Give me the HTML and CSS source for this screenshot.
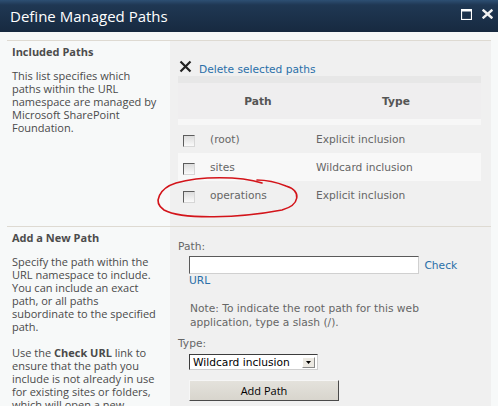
FILE: index.html
```html
<!DOCTYPE html>
<html lang="en">
<head>
  <meta charset="UTF-8" />
  <title>Define Managed Paths</title>
  <link rel="stylesheet" href="styles.css">
</head>
<body>
  <header class="dlg-title">
    <h1>Define Managed Paths</h1>
    <div class="title-btns">
      <svg width="11" height="11" viewBox="0 0 11 11">
        <rect x="0.5" y="0.5" width="10" height="10" fill="none" stroke="#fff" stroke-width="1.2"/>
        <rect x="0.5" y="0.5" width="10" height="2" fill="#fff"/>
      </svg>
      <svg width="11" height="10" viewBox="0 0 11 10">
        <path d="M1.5 1.5 L9.5 8.5 M9.5 1.5 L1.5 8.5" stroke="#f2f2f2" stroke-width="2.4" stroke-linecap="square"/>
      </svg>
    </div>
  </header>

  <main class="dlg-body">
    <section class="form-section">
      <div class="section-desc">
        <h2>Included Paths</h2>
        <p>This list specifies which paths within the URL namespace are managed by Microsoft SharePoint Foundation.</p>
      </div>
      <div class="section-body">
        <div class="toolbar">
          <svg class="del-icon" width="13" height="13" viewBox="0 0 13 13">
            <path d="M1.5 1.5 L11.5 11.5 M11.5 1.5 L1.5 11.5" stroke="#222" stroke-width="2.2"/>
          </svg>
          <a href="#">Delete selected paths</a>
        </div>
        <div class="toolbar-sep"></div>
        <table class="paths">
          <thead>
            <tr>
              <th class="col-check"></th>
              <th class="col-path">Path</th>
              <th class="col-type">Type</th>
            </tr>
          </thead>
          <tbody>
            <tr>
              <td><span class="cb"></span></td>
              <td>(root)</td>
              <td>Explicit inclusion</td>
            </tr>
            <tr class="alt">
              <td><span class="cb"></span></td>
              <td>sites</td>
              <td>Wildcard inclusion</td>
            </tr>
            <tr>
              <td><span class="cb"></span></td>
              <td>operations</td>
              <td>Explicit inclusion</td>
            </tr>
          </tbody>
        </table>
      </div>
    </section>

    <section class="form-section">
      <div class="section-desc">
        <h2>Add a New Path</h2>
        <p>Specify the path within the URL namespace to include. You can include an exact path, or all paths subordinate to the specified path.</p>
        <p>Use the <b>Check URL</b> link to ensure that the path you include is not already in use for existing sites or folders, which will open a new browser window.</p>
      </div>
      <div class="section-body add-path">
        <div class="field-label">Path:</div>
        <div class="field-control">
          <input type="text" class="text-input"> <a href="#">Check URL</a>
        </div>
        <p class="note">Note: To indicate the root path for this web application, type a slash (/).</p>
        <div class="field-label type-label">Type:</div>
        <div class="field-control">
          <div class="select">
            <span>Wildcard inclusion</span>
            <span class="select-arrow">
              <svg width="5" height="3" viewBox="0 0 5 3"><path d="M0 0 H5 L2.5 3 Z" fill="#000"/></svg>
            </span>
          </div>
          <button type="button" class="btn">Add Path</button>
        </div>
      </div>
    </section>
  </main>

  <svg class="annotation" width="498" height="406" viewBox="0 0 498 406">
    <path d="M262 183 C240 176, 200 176, 176 183 C160 188, 152 202, 164 210 C182 220, 240 218, 282 210 C300 205, 302 191, 286 186 C276 182, 266 180, 257 180"
          fill="none" stroke="#d3141a" stroke-width="1.6" stroke-linecap="round"/>
  </svg>
</body>
</html>
```

FILE: styles.css
```css
body {
  margin: 0;
  background: #f7f9f9;
  font-family: "DejaVu Sans", Verdana, sans-serif;
  font-size: 10.67px;
  color: #666;
  position: relative;
  overflow: hidden;
  height: 406px;
}

a {
  color: #2a6fa8;
  text-decoration: none;
}

.dlg-title {
  height: 32px;
  background: linear-gradient(#2d4f73, #1f3753 5px, #172a40);
  display: flex;
  align-items: center;
  justify-content: space-between;
  padding: 0 5px 0 10px;
}

.dlg-title h1 {
  margin: 0;
  font-family: "Open Sans", sans-serif;
  font-size: 15px;
  font-weight: normal;
  color: #fff;
}

.title-btns {
  display: flex;
  gap: 10px;
  align-items: center;
  margin-top: -4px;
}

.dlg-body {
  padding: 8px 7px 0;
}

.form-section {
  display: grid;
  grid-template-columns: 163px 1fr;
  border-top: 1px solid #dedad2;
}

.section-desc {
  padding: 4px 10px 0 5px;
  font-family: "Open Sans", sans-serif;
  font-size: 11px;
  line-height: 13px;
  color: #4a4a4a;
}

.section-desc h2 {
  margin: 0;
  font-size: 11px;
  font-weight: bold;
  color: #4c4c4c;
}

.section-desc p {
  margin: 11px 0 0;
}

.section-desc p + p {
  margin-top: 13px;
}

.section-body {
  background: #f0f0f0;
  padding: 0 10px 17px 8px;
}

/* toolbar */
.toolbar {
  padding: 19px 0 0 1px;
  line-height: 13px;
  display: flex;
  align-items: flex-end;
  gap: 7px;
}

.del-icon {
  margin-bottom: 3px;
}

.toolbar-sep {
  height: 7px;
  background: #e7e7e7;
}

/* paths table */
.paths {
  width: 100%;
  border-collapse: collapse;
}

.paths th {
  height: 36px;
  background: #efeeef;
  border-bottom: 6px solid #f7f7f7;
  font-weight: bold;
  color: #555;
  text-align: center;
  padding: 0;
}

.col-check { width: 27px; }
.col-path { width: 106px; }

.paths td {
  height: 28px;
  padding: 0 0 0 5px;
  vertical-align: middle;
}

.paths td:first-child {
  padding-left: 5px;
}

.paths tr.alt td {
  background: #f8f8f8;
}

.cb {
  display: block;
  width: 10px;
  height: 10px;
  margin-top: 3px;
  border: 1px solid;
  border-color: #5c5c5c #d6d6d6 #d6d6d6 #5c5c5c;
  background: linear-gradient(#dcdcdc, #fafafa);
}

/* add a new path */
.add-path {
  padding-top: 13px;
}

.field-label {
  line-height: 13px;
}

.field-control {
  padding-left: 11px;
  line-height: 13px;
}

.text-input {
  width: 226px;
  height: 14px;
  margin: 3px 0 0;
  padding: 1px;
  border: 1px solid;
  border-color: #5a5a5a #d0d0d0 #d0d0d0 #5a5a5a;
  background: #fff;
  font: inherit;
  vertical-align: baseline;
}

.text-input + a {
  margin-left: 2px;
}

.note {
  margin: 15px 0 0 12px;
  line-height: 14px;
}

.type-label {
  margin-top: 7px;
}

.select {
  display: flex;
  align-items: center;
  justify-content: space-between;
  width: 122px;
  height: 12px;
  margin-top: 4px;
  padding: 1px 2px 1px 3px;
  border: 1px solid;
  border-color: #3c3c3c #cfcfcf #cfcfcf #3c3c3c;
  background: #fff;
  color: #000;
}

.select-arrow {
  display: flex;
  align-items: center;
  justify-content: center;
  width: 13px;
  height: 11px;
  background: #ece9e2;
  border: 1px solid;
  border-color: #fff #8a8a8a #8a8a8a #fff;
  box-sizing: border-box;
}

.btn {
  display: block;
  width: 150px;
  height: 21px;
  margin-top: 10px;
  background: linear-gradient(#e4e2dc, #d8d5cd);
  border: 1px solid;
  border-color: #f6f6f6 #4a4a4a #4a4a4a #f6f6f6;
  font-family: "Open Sans", sans-serif;
  font-size: 11px;
  color: #000;
  padding: 0;
}

.annotation {
  position: absolute;
  top: 0;
  left: 0;
  pointer-events: none;
}
```
